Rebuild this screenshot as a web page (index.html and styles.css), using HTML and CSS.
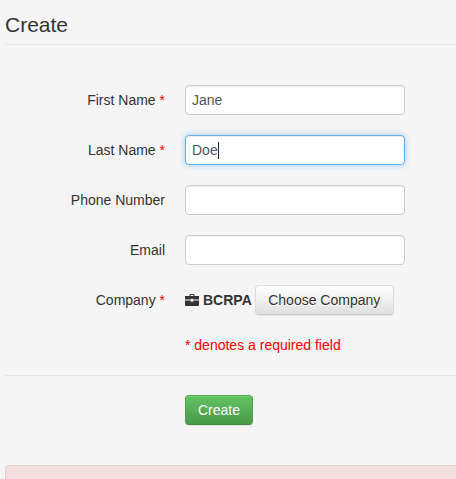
FILE: index.html
```html
<!DOCTYPE html>
<html lang="en">
<head>
    <meta charset="UTF-8">
    <title>Create</title>
    <link rel="stylesheet" href="styles.css">
</head>

<body>
<div class="wrapper">
  <h2 class="title">Create</h2>
  <form class="form">
    <div class="row">
      <label class="label">First Name <span class="req">*</span></label>
      <div class="field"><input class="input" value="Jane"></div>
    </div>
    <div class="row">
      <label class="label">Last Name <span class="req">*</span></label>
      <div class="field"><input class="input input-focus" value="Doe"><i class="caret"></i></div>
    </div>
    <div class="row">
      <label class="label">Phone Number</label>
      <div class="field"><input class="input"></div>
    </div>
    <div class="row">
      <label class="label">Email</label>
      <div class="field"><input class="input"></div>
    </div>
    <div class="row row-company">
      <label class="label">Company <span class="req">*</span></label>
      <div class="company">
        <svg class="icon" viewBox="0 0 14 12" width="14" height="12">
          <path d="M4.5 2V1a1 1 0 0 1 1-1h3a1 1 0 0 1 1 1v1H14v3.6H8.2V4.8H5.8v.8H0V2zM5.6 2h2.8V1.1H5.6z" fill-rule="evenodd"/>
          <path d="M0 6.5h5.8v1.2h2.4V6.5H14V11a1 1 0 0 1-1 1H1a1 1 0 0 1-1-1z"/>
        </svg>
        <b class="company-name">BCRPA</b>
        <button type="button" class="btn">Choose Company</button>
      </div>
    </div>
    <p class="note">* denotes a required field</p>
    <div class="actions">
      <button type="button" class="btn-create">Create</button>
    </div>
  </form>
  <div class="alert"></div>
</div>
</body>
</html>
```

FILE: styles.css
```css
*{
	box-sizing:border-box;
	padding:0;
	margin:0;
	}
html,body{
	height:479px;
	overflow:hidden;
	}
body{
	background:#f5f5f5;
	color:#333;
	font-family:"Liberation Sans",Arial,sans-serif;
	font-size:14px;
	line-height:20px;
	}
.wrapper{
	padding-left:5px;
	}
.title{
	height:45px;
	padding-top:13px;
	border-bottom:1px solid #e5e5e5;
	font-size:21px;
	font-weight:normal;
	line-height:23px;
	}
.form{
	padding-top:40px;
	}
.row{
	display:flex;
	align-items:center;
	height:30px;
	margin-bottom:20px;
	}
.label{
	width:160px;
	margin-right:20px;
	text-align:right;
	}
.req{
	color:#f00;
	}
.field{
	position:relative;
	width:220px;
	}
.input{
	display:block;
	width:100%;
	height:30px;
	padding:4px 6px;
	background:#fff;
	border:1px solid #ccc;
	border-radius:4px;
	box-shadow:inset 0 1px 1px rgba(0,0,0,.075);
	color:#555;
	font:14px/20px "Liberation Sans",Arial,sans-serif;
	outline:none;
	}
.input-focus{
	border-color:#66afe9;
	box-shadow:inset 0 1px 1px rgba(0,0,0,.075),0 0 6px rgba(102,175,233,.6);
	}
.caret{
	position:absolute;
	left:33px;
	top:7px;
	width:1px;
	height:17px;
	background:#222;
	}
.company{
	display:flex;
	align-items:center;
	}
.icon{
	fill:#333;
	margin-right:4px;
	}
.company-name{
	margin-right:3px;
	}
.btn{
	width:139px;
	height:30px;
	background:linear-gradient(#fff,#e0e0e0);
	border:1px solid #dbdbdb;
	border-color:#dbdbdb #dbdbdb #ccc;
	border-radius:4px;
	box-shadow:inset 0 1px 0 rgba(255,255,255,.15),0 1px 1px rgba(0,0,0,.075);
	color:#333;
	font:14px/20px "Liberation Sans",Arial,sans-serif;
	text-shadow:0 1px 0 #fff;
	}
.note{
	height:20px;
	margin-left:180px;
	color:#f00;
	}
.actions{
	margin-top:20px;
	padding:19px 0 0 180px;
	border-top:1px solid #e5e5e5;
	}
.btn-create{
	display:block;
	width:68px;
	height:30px;
	background:linear-gradient(#62c462,#4a994a);
	border:1px solid #4a994a;
	border-color:#55a955 #4fa34f #458f45;
	border-radius:4px;
	box-shadow:inset 0 1px 0 rgba(255,255,255,.15),0 1px 1px rgba(0,0,0,.075);
	color:#fff;
	font:14px/20px "Liberation Sans",Arial,sans-serif;
	}
.alert{
	height:14px;
	margin-top:40px;
	background:#f2dede;
	border:1px solid #ebccd1;
	border-bottom:0;
	border-right:0;
	border-radius:4px 0 0 0;
	}
```
